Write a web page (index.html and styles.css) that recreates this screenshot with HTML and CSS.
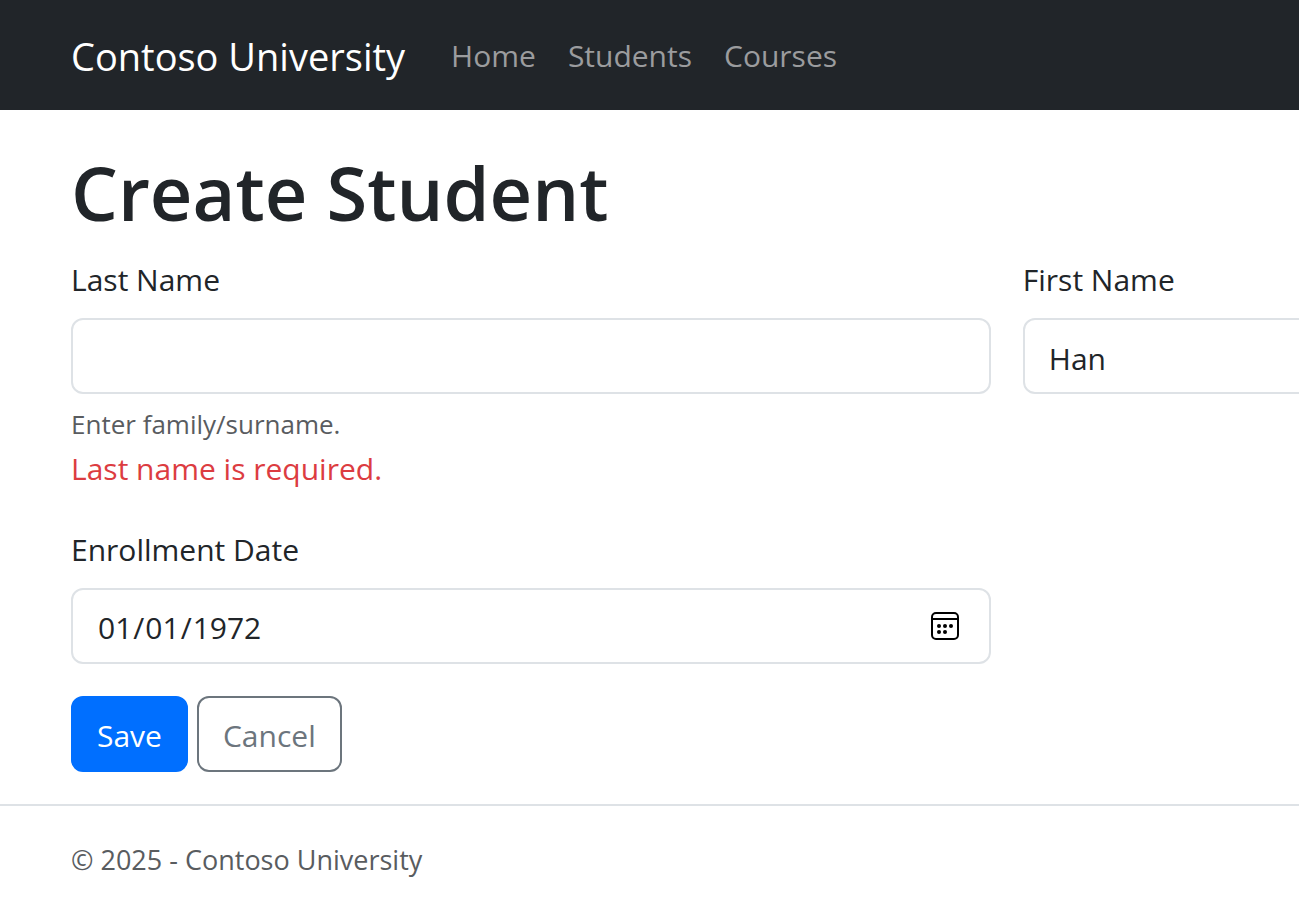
FILE: index.html
```html
<!DOCTYPE html>
<html lang="en-US">
<head>
<meta charset="utf-8">
<title>Create Student - Contoso University</title>
<link rel="stylesheet" href="styles.css">
</head>
<body>
<header class="navbar">
  <a class="brand" href="#">Contoso University</a>
  <nav class="nav">
    <a href="#">Home</a>
    <a href="#">Students</a>
    <a href="#">Courses</a>
  </nav>
</header>
<main class="main">
  <h1 class="title">Create Student</h1>
  <form class="form">
    <div class="field">
      <label for="last">Last Name</label>
      <input class="control" id="last" type="text" aria-describedby="last-help last-error">
      <div class="help" id="last-help">Enter family/surname.</div>
      <div class="error" id="last-error">Last name is required.</div>
    </div>
    <div class="field">
      <label for="first">First Name</label>
      <input class="control" id="first" type="text" value="Han">
    </div>
    <div class="field">
      <label for="date">Enrollment Date</label>
      <div class="date">
        <input class="control" id="date" type="date" value="1972-01-01">
        <svg class="calendar" viewBox="0 0 28 28" aria-hidden="true">
          <rect x="1" y="1" width="26" height="26" rx="4" fill="none" stroke="#000" stroke-width="2"/>
          <path d="M1 7h26" stroke="#000" stroke-width="2"/>
          <circle cx="8" cy="14" r="2"/><circle cx="14" cy="14" r="2"/><circle cx="20" cy="14" r="2"/>
          <circle cx="8" cy="20" r="2"/><circle cx="14" cy="20" r="2"/>
        </svg>
      </div>
    </div>
    <div class="actions">
      <button class="btn save" type="submit">Save</button>
      <button class="btn cancel" type="button">Cancel</button>
    </div>
  </form>
</main>
<footer class="footer">© 2025 - Contoso University</footer>
</body>
</html>
```
FILE: styles.css
```css
* { box-sizing: border-box; }
body {
  margin: 0;
  overflow-x: hidden;
  background: #fff;
  color: #212529;
  font: 30px/48px "Segoe UI", "Open Sans", "Noto Sans", sans-serif;
}
.navbar {
  display: flex;
  align-items: center;
  gap: 46px;
  min-height: 110px;
  padding: 2px 71px 0;
  background: #212529;
}
.brand {
  color: #fff;
  font-size: 38px;
  text-decoration: none;
}
.nav { display: flex; gap: 32px; }
.nav a { color: #9b9c9e; text-decoration: none; }
.main { padding: 32px 0 32px 71px; }
.title {
  margin: 0 0 10px;
  font-size: 74px;
  font-weight: 600;
  line-height: 102px;
}
.form {
  display: grid;
  grid-template-columns: 74.9% 74.9%;
  gap: 32px;
}
.field label {
  display: block;
  margin-bottom: 12px;
  line-height: 52px;
}
.control {
  display: block;
  width: 100%;
  height: 76px;
  padding: 14px 24px 10px;
  border: 2px solid #dee2e6;
  border-radius: 12px;
  background: #fff;
  color: #212529;
  font: inherit;
}
.control::-webkit-datetime-edit { padding: 0; }
.control::-webkit-calendar-picker-indicator { opacity: 0; }
.help {
  margin-top: 8px;
  color: #595c5f;
  font-size: 26px;
  line-height: 44px;
}
.error { color: #dc3c41; line-height: 46px; }
.date { position: relative; }
.calendar {
  position: absolute;
  top: 24px;
  right: 32px;
  width: 28px;
  height: 28px;
  pointer-events: none;
}
.actions {
  display: flex;
  grid-column: 1 / -1;
  gap: 9px;
}
.btn {
  height: 76px;
  padding: 14px 24px 10px;
  border: 2px solid;
  border-radius: 12px;
  font: inherit;
}
.save { border-color: #006fff; background: #006fff; color: #fff; }
.cancel { border-color: #6c757d; background: #fff; color: #6c757d; }
.footer {
  padding: 32px 71px;
  border-top: 2px solid #dee2e6;
  color: #595c5f;
  font-size: 27px;
  line-height: 44px;
}
```
